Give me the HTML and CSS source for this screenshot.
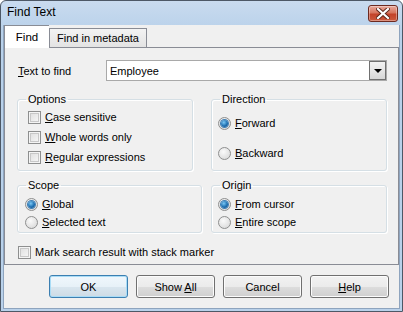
FILE: index.html
```html
<!DOCTYPE html>
<html lang="en">
<head>
    <meta charset="UTF-8">
    <title>Find Text</title>
    <link rel="stylesheet" href="styles.css">
</head>
<body>
    <div class="window">
        <div class="titlebar">
            <span class="title">Find Text</span>
            <div class="close-btn">
                <svg width="14" height="11" viewBox="0 0 14 11">
                    <path d="M2 1 L12 10 M12 1 L2 10" stroke="#5a2418" stroke-width="4" stroke-linecap="square"/>
                    <path d="M2 1 L12 10 M12 1 L2 10" stroke="#fff" stroke-width="2.2" stroke-linecap="square"/>
                </svg>
            </div>
        </div>

        <div class="client">
            <div class="tabs">
                <div class="tab active">Find</div>
                <div class="tab">Find in metadata</div>
            </div>

            <div class="sheet">
                <div class="find-row">
                    <label class="find-label"><u>T</u>ext to find</label>
                    <div class="combo">
                        <span class="combo-text">Employee</span>
                        <div class="combo-btn"><span class="arrow"></span></div>
                    </div>
                </div>

                <div class="group-row first">
                    <fieldset class="group options">
                        <legend>Options</legend>
                        <div class="group-body">
                            <div class="check-item"><span class="checkbox"></span><span><u>C</u>ase sensitive</span></div>
                            <div class="check-item"><span class="checkbox"></span><span><u>W</u>hole words only</span></div>
                            <div class="check-item"><span class="checkbox"></span><span><u>R</u>egular expressions</span></div>
                        </div>
                    </fieldset>
                    <fieldset class="group direction">
                        <legend>Direction</legend>
                        <div class="group-body">
                            <div class="radio-item"><span class="radio checked"></span><span><u>F</u>orward</span></div>
                            <div class="radio-item"><span class="radio"></span><span><u>B</u>ackward</span></div>
                        </div>
                    </fieldset>
                </div>

                <div class="group-row second">
                    <fieldset class="group scope">
                        <legend>Scope</legend>
                        <div class="group-body">
                            <div class="radio-item"><span class="radio checked"></span><span><u>G</u>lobal</span></div>
                            <div class="radio-item"><span class="radio"></span><span><u>S</u>elected text</span></div>
                        </div>
                    </fieldset>
                    <fieldset class="group origin">
                        <legend>Origin</legend>
                        <div class="group-body">
                            <div class="radio-item"><span class="radio checked"></span><span><u>F</u>rom cursor</span></div>
                            <div class="radio-item"><span class="radio"></span><span><u>E</u>ntire scope</span></div>
                        </div>
                    </fieldset>
                </div>

                <div class="check-item mark"><span class="checkbox"></span><span>Mark search result with stack marker</span></div>
            </div>

            <div class="buttons">
                <button class="btn default">OK</button>
                <button class="btn">Show <u>A</u>ll</button>
                <button class="btn">Cancel</button>
                <button class="btn"><u>H</u>elp</button>
            </div>
        </div>
    </div>
</body>
</html>
```

FILE: styles.css
```css
* {
    margin: 0;
    padding: 0;
    box-sizing: border-box;
}

body {
    font-family: 'Liberation Sans', Arial, sans-serif;
    font-size: 11px;
    color: #000;
    background: #fff;
    width: 403px;
    height: 312px;
    overflow: hidden;
}

u {
    text-underline-offset: 1px;
}

.window {
    width: 403px;
    height: 312px;
    border: 1px solid #4d5866;
    border-radius: 6px 6px 0 0;
    background: linear-gradient(#c9dbef, #b9d1ea 30px, #b9d1ea);
    display: flex;
    flex-direction: column;
}

.titlebar {
    height: 24px;
    display: flex;
    align-items: center;
    justify-content: space-between;
    padding: 0 4px 2px 6px;
}

.title {
    font-size: 12px;
    color: #000;
}

.close-btn {
    width: 30px;
    height: 17px;
    margin-top: 3px;
    border: 1px solid #6d2a20;
    border-radius: 3px;
    background: linear-gradient(#e9a99c, #d7765f 45%, #c3432a 55%, #cc5a3e);
    display: flex;
    align-items: center;
    justify-content: center;
    box-shadow: inset 0 0 0 1px rgba(255,255,255,0.35);
}

.client {
    flex: 1;
    margin: 0 2px 2px 2px;
    background: #f0f0f0;
    border: 1px solid #8ea4be;
    border-top: none;
    display: flex;
    flex-direction: column;
}

.tabs {
    display: flex;
    align-items: flex-end;
    height: 22px;
    position: relative;
    z-index: 1;
}

.tab {
    height: 19px;
    padding: 0 7px;
    border: 1px solid #898c95;
    border-bottom: none;
    background: linear-gradient(#f3f3f3, #e3e3e3);
    line-height: 18px;
}

.tab.active {
    height: 23px;
    width: 45px;
    margin-bottom: -1px;
    background: #fff;
    text-align: center;
    line-height: 22px;
    font-size: 11.5px;
    border-right: none;
}

.sheet {
    height: 218px;
    border: 1px solid #898c95;
    padding: 12px 0 0 12px;
}

.find-row {
    display: flex;
    align-items: center;
    height: 21px;
}

.find-label {
    width: 89px;
    padding-left: 1px;
}

.combo {
    width: 281px;
    height: 21px;
    border: 1px solid #a9a9a9;
    background: #fff;
    display: flex;
    align-items: center;
    justify-content: space-between;
}

.combo-text {
    padding-left: 3px;
}

.combo-btn {
    width: 17px;
    height: 19px;
    border: 1px solid #707070;
    background: linear-gradient(#f2f2f2, #e6e6e6 50%, #d6d6d6);
    display: flex;
    align-items: center;
    justify-content: center;
}

.arrow {
    width: 0;
    height: 0;
    border-left: 4px solid transparent;
    border-right: 4px solid transparent;
    border-top: 4px solid #000;
}

.group-row {
    display: flex;
}

.group-row.first {
    margin-top: 12px;
    height: 78px;
    gap: 18px;
}

.group-row.second {
    margin-top: 8px;
    height: 54px;
    gap: 9px;
}

.group {
    border: 1px solid #d5dfe5;
    border-radius: 3px;
    box-shadow: inset 1px 1px 0 #fff, 1px 1px 0 #fff;
    padding: 0;
    min-width: 0;
    height: 100%;
}

.group legend {
    margin-left: 8px;
    padding: 0 2px;
    line-height: 13px;
}

.options {
    width: 176px;
}

.options .group-body {
    padding: 1px 0 0 10px;
}

.direction {
    width: 176px;
}

.direction .group-body {
    padding: 7px 0 0 6px;
}

.direction .radio-item + .radio-item {
    margin-top: 10px;
}

.scope {
    width: 185px;
}

.scope .group-body {
    padding: 3px 0 0 7px;
}

.origin {
    width: 176px;
}

.origin .group-body {
    padding: 3px 0 0 6px;
}

.check-item,
.radio-item {
    display: flex;
    align-items: center;
    gap: 4px;
    height: 20px;
}

.scope .radio-item,
.origin .radio-item {
    height: 18px;
}

.checkbox {
    width: 13px;
    height: 13px;
    border: 1px solid #8e8f8f;
    background: linear-gradient(135deg, #dcdcdc, #fafafa);
    box-shadow: inset 0 0 0 1px #f4f4f4, inset 0 0 0 2px #c8c8c8;
    flex-shrink: 0;
}

.radio {
    width: 13px;
    height: 13px;
    border-radius: 50%;
    border: 1px solid #8e8f8f;
    background: radial-gradient(circle at 40% 35%, #fafafa, #d4d4d4);
    flex-shrink: 0;
    display: flex;
    align-items: center;
    justify-content: center;
}

.radio.checked::after {
    content: "";
    width: 7px;
    height: 7px;
    border-radius: 50%;
    background: radial-gradient(circle at 40% 35%, #7cc8f4, #1f71b3 55%, #0d4b85);
    box-shadow: 0 0 0 1px #3f7fb5;
}

.check-item.mark {
    margin-top: 11px;
    margin-left: 1px;
    height: 16px;
}

.buttons {
    display: flex;
    justify-content: flex-end;
    gap: 8px;
    padding: 10px 10px 0 0;
}

.btn {
    width: 79px;
    height: 23px;
    font-family: 'Liberation Sans', Arial, sans-serif;
    font-size: 11px;
    color: #000;
    border: 1px solid #707070;
    border-radius: 3px;
    background: linear-gradient(#f2f2f2, #ebebeb 50%, #dddddd 51%, #cfcfcf);
    box-shadow: inset 0 0 0 1px #fcfcfc;
}

.btn.default {
    border-color: #3c7fb1;
    box-shadow: inset 0 0 0 1px #a9dcf6;
    background: linear-gradient(#f0f7fc, #e7f1f8 50%, #d9e6ef 51%, #cddbe5);
}
```
